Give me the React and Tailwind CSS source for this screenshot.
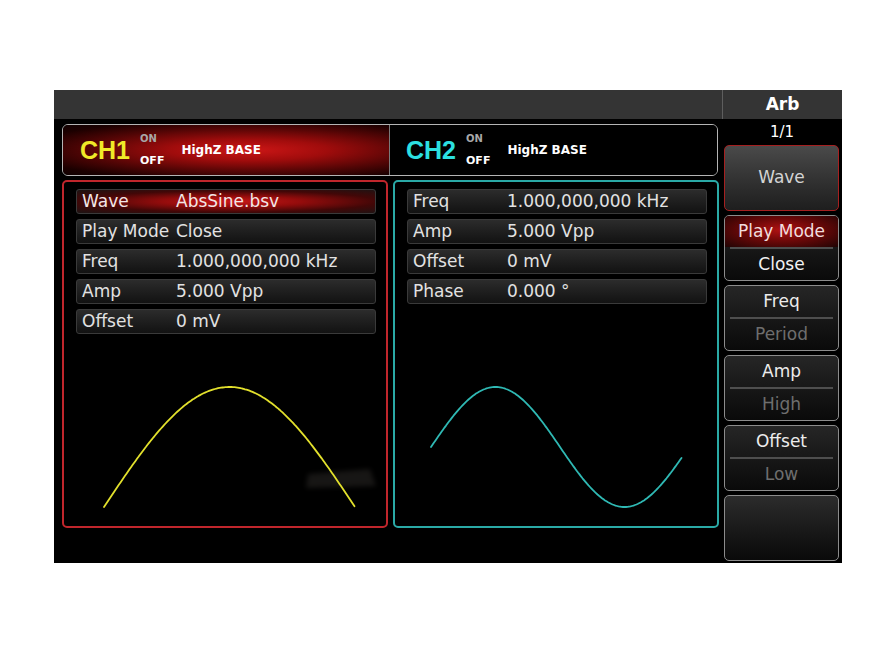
import React from "react";

const FONT = { fontFamily: '"DejaVu Sans", "Liberation Sans", sans-serif' };
const ARIAL = { fontFamily: '"Liberation Sans", Arial, sans-serif' };

const ch1Rows = [
  { label: "Wave", value: "AbsSine.bsv", active: true },
  { label: "Play Mode", value: "Close" },
  { label: "Freq", value: "1.000,000,000 kHz" },
  { label: "Amp", value: "5.000 Vpp" },
  { label: "Offset", value: "0 mV" },
];

const ch2Rows = [
  { label: "Freq", value: "1.000,000,000 kHz" },
  { label: "Amp", value: "5.000 Vpp" },
  { label: "Offset", value: "0 mV" },
  { label: "Phase", value: "0.000 °" },
];

// Build a polyline path from a function y = f(x)
function tracePath(fn, x0, x1, step = 1.5) {
  let d = "";
  for (let x = x0; x <= x1 + 0.001; x += step) {
    d += (d ? " L" : "M") + x.toFixed(1) + " " + fn(x).toFixed(1);
  }
  return d;
}

const absSinePath = tracePath(
  (x) => 173 - 120 * Math.sin((Math.PI * (x - 40)) / 251),
  40,
  291
);
const sinePath = tracePath(
  (x) => 113 - 60 * Math.sin((2 * Math.PI * (x - 36)) / 258),
  36,
  287
);

function ParamRow({ label, value, active }) {
  return (
    <div
      className={
        "flex h-[25px] items-center rounded-[3px] border border-[#3a3a3a] pl-[5px] text-[17px] leading-none whitespace-nowrap " +
        (active
          ? "bg-[radial-gradient(ellipse_at_52%_50%,#c81818_0%,#940c0c_32%,#420707_66%,#1c1414_100%)] text-[#f2e6e6]"
          : "bg-gradient-to-b from-[#2c2c2c] to-[#121212] text-[#e2e2e2]")
      }
    >
      <span className="w-[94px] shrink-0">{label}</span>
      <span>{value}</span>
    </div>
  );
}

function ChannelPanel({ rows, color, children }) {
  return (
    <div
      className={
        "flex h-[348px] w-[326px] flex-col rounded-[5px] border-2 " + color
      }
    >
      <div className="flex flex-col gap-[5px] pt-[7px] pl-[12px] pr-[10px]">
        {rows.map((r) => (
          <ParamRow key={r.label} {...r} />
        ))}
      </div>
      <div className="flex flex-1 items-end">{children}</div>
    </div>
  );
}

function ChannelTag({ name, nameColor }) {
  return (
    <div className="flex items-center">
      <span
        className={"text-[25px] leading-none font-bold " + nameColor}
        style={ARIAL}
      >
        {name}
      </span>
      <div className="ml-[10px] flex flex-col leading-none">
        <span className="text-[10px] font-bold text-[#a8a8a8]">ON</span>
        <span className="mt-[11px] text-[11px] font-bold text-white">OFF</span>
      </div>
      <span className="ml-[17px] text-[12px] font-bold text-white">
        HighZ BASE
      </span>
    </div>
  );
}

function SoftKey({ top, bottom, topActive, dimBottom }) {
  return (
    <div className="flex h-[66px] flex-col overflow-hidden rounded-[5px] border-[1.5px] border-[#8c8c8c] bg-gradient-to-b from-[#262626] to-[#0a0a0a]">
      <div
        className={
          "flex h-[31px] items-center justify-center text-[17px] leading-none " +
          (topActive
            ? "bg-[radial-gradient(ellipse_at_50%_45%,#b01212_0%,#6e0808_45%,#200404_100%)] text-[#f0dede]"
            : "text-[#ececec]")
        }
      >
        {top}
      </div>
      <div className="mx-[5px] h-[2px] bg-[#4e4e4e]" />
      <div
        className={
          "flex flex-1 items-center justify-center text-[17px] leading-none " +
          (dimBottom ? "text-[#6e6e6e]" : "text-[#f2f2f2]")
        }
      >
        {bottom}
      </div>
    </div>
  );
}

export default function App() {
  return (
    <div className="h-[648px] w-[891px] bg-white pt-[90px] pl-[54px]" style={FONT}>
      <div className="flex h-[473px] w-[788px] bg-black">
        {/* main area */}
        <div className="flex w-[668px] flex-col">
          <div className="h-[29px] bg-[#343434]" />

          {/* channel header strip */}
          <div className="mt-[5px] ml-[8px] flex h-[52px] w-[656px] overflow-hidden rounded-[6px] border-[1.5px] border-[#b4b4b4]">
            <div className="flex w-[327px] items-center border-r border-[#7a7a7a] bg-[radial-gradient(ellipse_at_57%_50%,#cc1616_0%,#a00c0c_30%,#520505_62%,#1c0000_86%,#100000_100%)] pl-[17px]">
              <ChannelTag name="CH1" nameColor="text-[#f0ea28]" />
            </div>
            <div className="flex flex-1 items-center bg-black pl-[16px]">
              <ChannelTag name="CH2" nameColor="text-[#2ce0e0]" />
            </div>
          </div>

          {/* channel panels */}
          <div className="mt-[4px] ml-[8px] flex gap-[5px]">
            <ChannelPanel rows={ch1Rows} color="border-[#c0262c]">
              <svg width="322" height="192" viewBox="0 0 322 192">
                <defs>
                  <filter id="smudge" x="-20%" y="-60%" width="140%" height="220%">
                    <feGaussianBlur stdDeviation="2.5" />
                  </filter>
                </defs>
                <polygon
                  points="244,140 306,135 312,152 242,154"
                  fill="#6a655e"
                  opacity="0.22"
                  filter="url(#smudge)"
                />
                <path
                  d={absSinePath}
                  fill="none"
                  stroke="#e2e02c"
                  strokeWidth="1.8"
                  strokeLinejoin="round"
                  strokeLinecap="round"
                />
              </svg>
            </ChannelPanel>
            <ChannelPanel rows={ch2Rows} color="border-[#2aa9a6]">
              <svg width="322" height="192" viewBox="0 0 322 192">
                <path
                  d={sinePath}
                  fill="none"
                  stroke="#2fb9b4"
                  strokeWidth="1.8"
                  strokeLinejoin="round"
                  strokeLinecap="round"
                />
              </svg>
            </ChannelPanel>
          </div>
        </div>

        {/* soft key column */}
        <div className="flex w-[120px] flex-col">
          <div className="flex h-[29px] items-center justify-center border-l border-[#5e5e5e] bg-[#343434] text-[17px] font-bold text-white">
            Arb
          </div>
          <div className="flex h-[26px] items-center justify-center text-[15px] text-white">
            1/1
          </div>
          <div className="flex flex-col gap-[4px] pl-[2px] pr-[3px]">
            <div className="flex h-[66px] items-center justify-center rounded-[5px] border-[1.5px] border-[#a52020] bg-gradient-to-b from-[#4a4a4a] to-[#1e1e1e] text-[17px] text-[#d4d4d4]">
              Wave
            </div>
            <SoftKey top="Play Mode" bottom="Close" topActive />
            <SoftKey top="Freq" bottom="Period" dimBottom />
            <SoftKey top="Amp" bottom="High" dimBottom />
            <SoftKey top="Offset" bottom="Low" dimBottom />
            <div className="h-[66px] rounded-[5px] border-[1.5px] border-[#8c8c8c] bg-gradient-to-b from-[#2c2c2c] to-[#0a0a0a]" />
          </div>
        </div>
      </div>
    </div>
  );
}
